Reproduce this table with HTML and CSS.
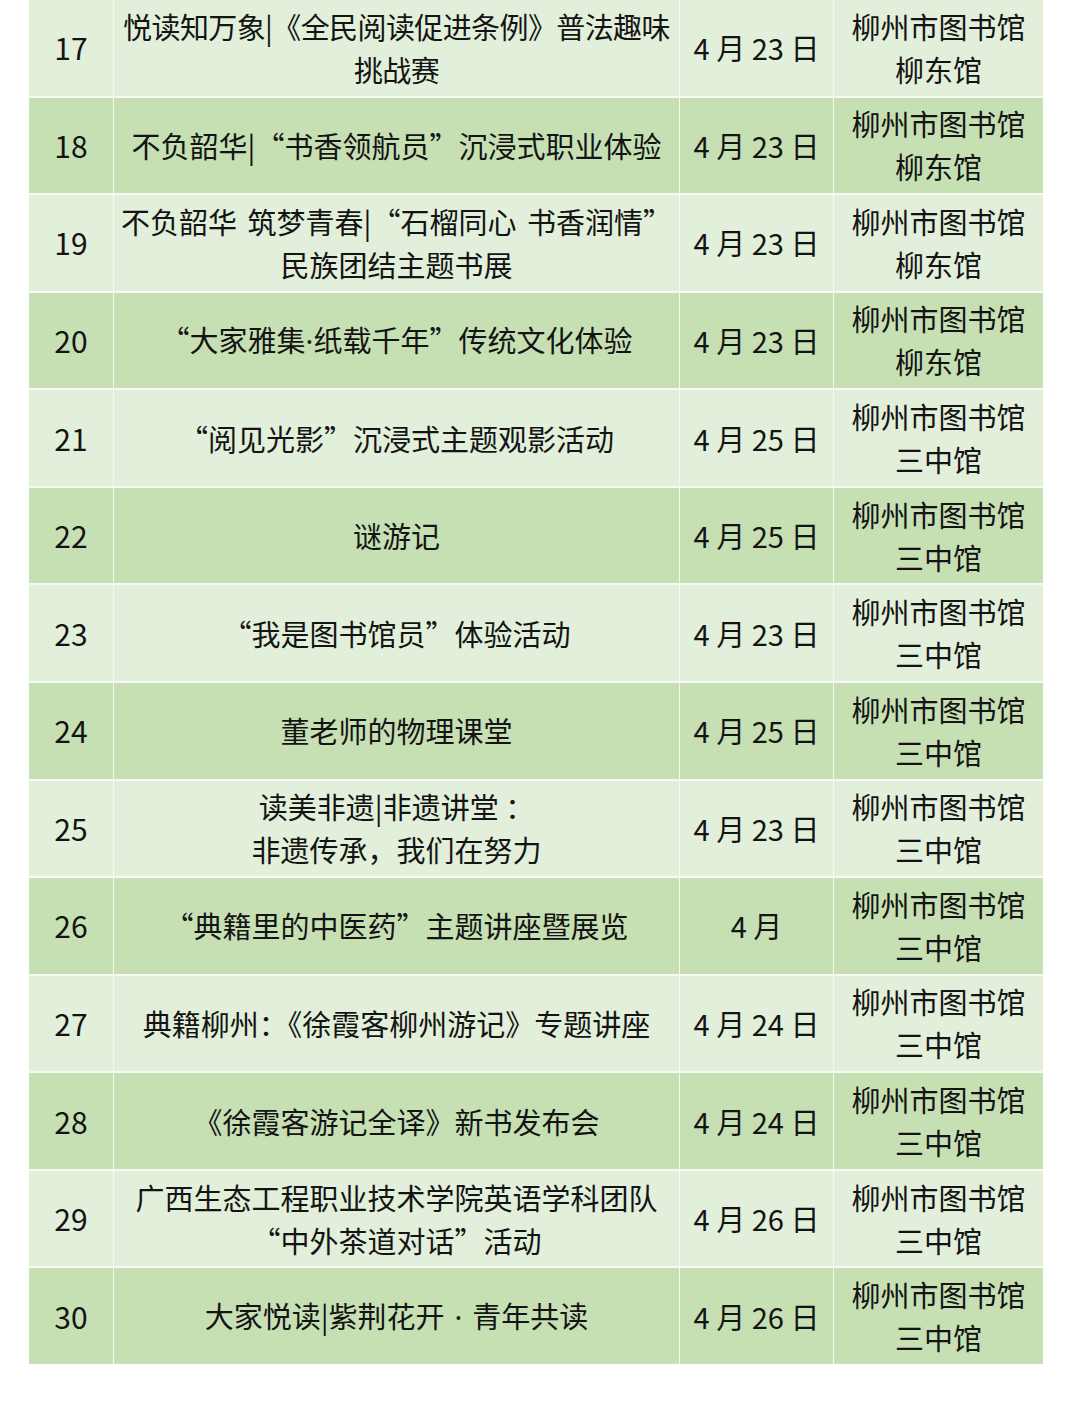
FILE: index.html
```html
<!DOCTYPE html>
<html lang="zh-CN">
<head>
<meta charset="utf-8">
<title>活动列表</title>
<link rel="stylesheet" href="styles.css">
</head>
<body>
<div class="table">
  <div class="row"><div class="cell num">17</div><div class="cell ev tight">悦读知万象|《全民阅读促进条例》普法趣味<br>挑战赛</div><div class="cell date">4 月 23 日</div><div class="cell loc">柳州市图书馆<br>柳东馆</div></div>
  <div class="row alt"><div class="cell num">18</div><div class="cell ev">不负韶华|“书香领航员”沉浸式职业体验</div><div class="cell date">4 月 23 日</div><div class="cell loc">柳州市图书馆<br>柳东馆</div></div>
  <div class="row"><div class="cell num">19</div><div class="cell ev wide">不负韶华 筑梦青春|“石榴同心 书香润情”<br>民族团结主题书展</div><div class="cell date">4 月 23 日</div><div class="cell loc">柳州市图书馆<br>柳东馆</div></div>
  <div class="row alt"><div class="cell num">20</div><div class="cell ev"><span class="t">“大家雅集<span class="dot">·</span>纸载千年”传统文化体验</span></div><div class="cell date">4 月 23 日</div><div class="cell loc">柳州市图书馆<br>柳东馆</div></div>
  <div class="row"><div class="cell num">21</div><div class="cell ev">“阅见光影”沉浸式主题观影活动</div><div class="cell date">4 月 25 日</div><div class="cell loc">柳州市图书馆<br>三中馆</div></div>
  <div class="row alt"><div class="cell num">22</div><div class="cell ev">谜游记</div><div class="cell date">4 月 25 日</div><div class="cell loc">柳州市图书馆<br>三中馆</div></div>
  <div class="row"><div class="cell num">23</div><div class="cell ev">“我是图书馆员”体验活动</div><div class="cell date">4 月 23 日</div><div class="cell loc">柳州市图书馆<br>三中馆</div></div>
  <div class="row alt"><div class="cell num">24</div><div class="cell ev">董老师的物理课堂</div><div class="cell date">4 月 25 日</div><div class="cell loc">柳州市图书馆<br>三中馆</div></div>
  <div class="row"><div class="cell num">25</div><div class="cell ev">读美非遗|非遗讲堂 ：<br>非遗传承，我们在努力</div><div class="cell date">4 月 23 日</div><div class="cell loc">柳州市图书馆<br>三中馆</div></div>
  <div class="row alt"><div class="cell num">26</div><div class="cell ev">“典籍里的中医药”主题讲座暨展览</div><div class="cell date">4 月</div><div class="cell loc">柳州市图书馆<br>三中馆</div></div>
  <div class="row"><div class="cell num">27</div><div class="cell ev">典籍柳州：《徐霞客柳州游记》专题讲座</div><div class="cell date">4 月 24 日</div><div class="cell loc">柳州市图书馆<br>三中馆</div></div>
  <div class="row alt"><div class="cell num">28</div><div class="cell ev">《徐霞客游记全译》新书发布会</div><div class="cell date">4 月 24 日</div><div class="cell loc">柳州市图书馆<br>三中馆</div></div>
  <div class="row"><div class="cell num">29</div><div class="cell ev">广西生态工程职业技术学院英语学科团队<br>“中外茶道对话”活动</div><div class="cell date">4 月 26 日</div><div class="cell loc">柳州市图书馆<br>三中馆</div></div>
  <div class="row alt"><div class="cell num">30</div><div class="cell ev"><span class="t">大家悦读|紫荆花开<span class="wdot">·</span>青年共读</span></div><div class="cell date">4 月 26 日</div><div class="cell loc">柳州市图书馆<br>三中馆</div></div>
</div>
</body>
</html>
```

FILE: styles.css
```css
html, body {
  margin: 0;
  padding: 0;
  background: #ffffff;
}
body {
  width: 1080px;
  height: 1411px;
  font-family: "Noto Sans CJK SC", "Noto Sans", sans-serif;
  color: #141414;
}
.table {
  margin-left: 29px;
  width: 1014px;
  height: 1364px;
  display: grid;
  grid-template-columns: 84px 565px 153px 209px;
  grid-template-rows: repeat(14, 1fr);
  column-gap: 1px;
  row-gap: 2px;
  background: #f6faf3;
}
.row {
  display: contents;
}
.cell {
  display: flex;
  align-items: center;
  justify-content: center;
  text-align: center;
  font-size: 29px;
  line-height: 43px;
  background: #e2efda;
  white-space: nowrap;
}
.row.alt .cell {
  background: #c6e0b4;
}
.num {
  font-size: 30px;
}
.tight {
  letter-spacing: -0.6px;
}
.wide {
  word-spacing: 4px;
}
.dot {
  font-family: "Noto Sans", "DejaVu Sans", sans-serif;
}
.wdot {
  font-family: "Noto Sans", "DejaVu Sans", sans-serif;
  padding: 0 10px;
}
```
